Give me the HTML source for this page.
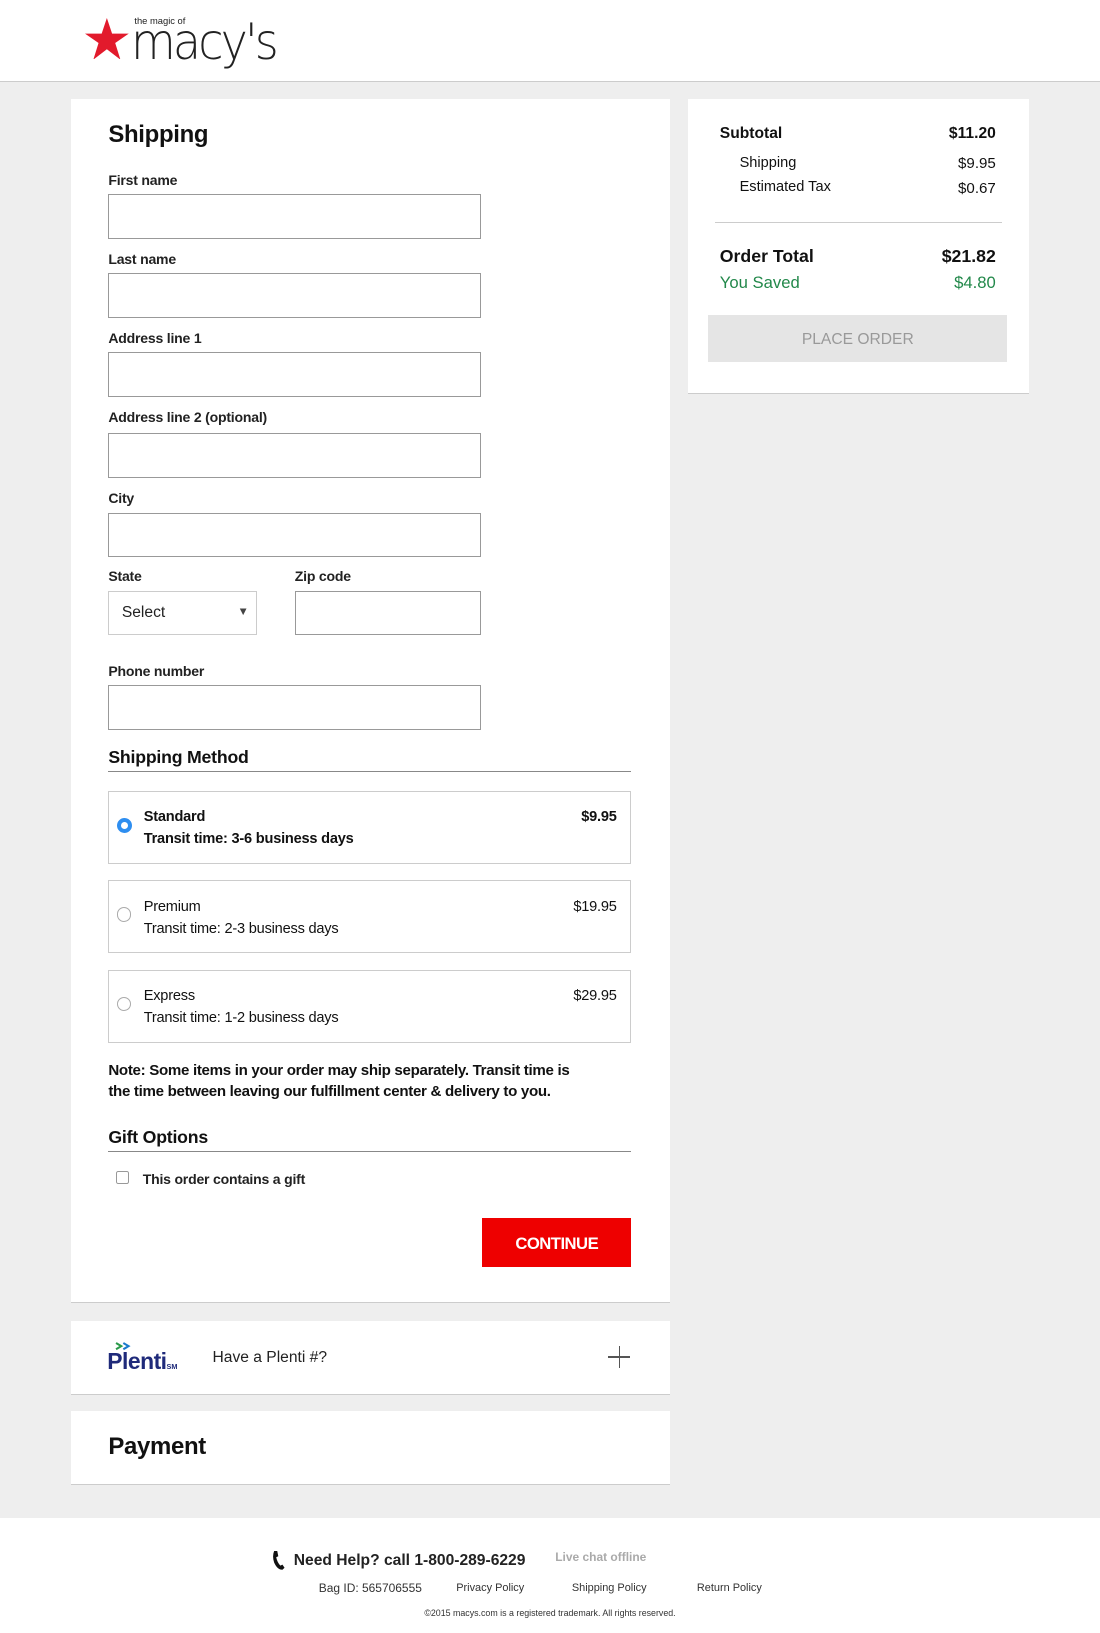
<!DOCTYPE html>
<html><head><meta charset="utf-8"><style>
html{zoom:1.04167}
body{margin:0;width:1056px;height:1568px;background:#eee;font-family:"Liberation Sans",Arial,sans-serif;color:#111;position:relative;overflow:hidden}
.a{position:absolute}
.hdr{left:0;top:0;width:1056px;height:78px;background:#fff;border-bottom:1px solid #ccc}
.card{background:#fff;border-bottom:1px solid #ccc}
.lbl{font-size:13.5px;font-weight:bold;color:#222;letter-spacing:-0.2px}
.inp{border:1px solid #999;background:#fff;box-sizing:border-box;height:43px}
.opt{border:1px solid #ccc;box-sizing:border-box;left:104px;width:502px;height:70px;letter-spacing:-0.2px}
.opt .r{position:absolute;left:7px;top:25px;width:14px;height:14px;border:1px solid #aaa;border-radius:50%;box-sizing:border-box}
.opt .t1{position:absolute;left:33px;top:17px;font-size:14px}
.opt .t2{position:absolute;left:33px;top:38px;font-size:14px}
.opt .p{position:absolute;right:13px;top:17px;font-size:14px}
.foot{left:0;top:1457px;width:1056px;height:111px;background:#fff}
</style></head><body>
<div class="a hdr">
  <svg class="a" style="left:82px;top:17px" width="42" height="40" viewBox="0 0 42 40"><polygon fill="#e21a2c" points="21,0 26,15 42,15 29,24 34,40 21,30 8,40 13,24 0,15 16,15"/></svg>
  <div class="a" style="left:129px;top:15px;font-size:9px;color:#222">the magic of</div>
  <div class="a" style="left:126px;top:12px;font-size:48px;font-weight:100;letter-spacing:-3px;color:#222;font-family:'DejaVu Sans','Liberation Sans',sans-serif;transform:scaleX(0.92);transform-origin:left">macy's</div>
</div>

<div class="a card" style="left:68px;top:95px;width:575px;height:1155px"></div>
<div class="a" style="left:104px;top:116px;font-size:23px;font-weight:bold;letter-spacing:-0.3px">Shipping</div>

<div class="a lbl" style="left:104px;top:165px">First name</div>
<div class="a inp" style="left:104px;top:186px;width:358px"></div>
<div class="a lbl" style="left:104px;top:241px">Last name</div>
<div class="a inp" style="left:104px;top:262px;width:358px"></div>
<div class="a lbl" style="left:104px;top:317px">Address line 1</div>
<div class="a inp" style="left:104px;top:338px;width:358px"></div>
<div class="a lbl" style="left:104px;top:393px">Address line 2 (optional)</div>
<div class="a inp" style="left:104px;top:416px;width:358px"></div>
<div class="a lbl" style="left:104px;top:470px">City</div>
<div class="a inp" style="left:104px;top:492px;width:358px"></div>
<div class="a lbl" style="left:104px;top:545px">State</div>
<div class="a lbl" style="left:283px;top:545px">Zip code</div>
<div class="a inp" style="left:104px;top:567px;width:143px;border-color:#ccc"><span class="a" style="left:12px;top:12px;font-size:15px;color:#222">Select</span><span class="a" style="left:123px;top:14px;font-size:11px;color:#444">▼</span></div>
<div class="a inp" style="left:283px;top:567px;width:179px"></div>
<div class="a lbl" style="left:104px;top:636px">Phone number</div>
<div class="a inp" style="left:104px;top:658px;width:358px"></div>

<div class="a" style="left:104px;top:717px;font-size:17px;font-weight:bold;letter-spacing:-0.2px">Shipping Method</div>
<div class="a" style="left:104px;top:740px;width:502px;height:1px;background:#888"></div>

<div class="a opt" style="top:759px"><div class="r" style="border:4px solid #2e8ef0;background:#fff;width:15px;height:15px"></div><div class="t1" style="font-weight:bold">Standard</div><div class="t2" style="font-weight:bold">Transit time: 3-6 business days</div><div class="p" style="font-weight:bold">$9.95</div></div>
<div class="a opt" style="top:845px"><div class="r"></div><div class="t1">Premium</div><div class="t2">Transit time: 2-3 business days</div><div class="p">$19.95</div></div>
<div class="a opt" style="top:931px"><div class="r"></div><div class="t1">Express</div><div class="t2">Transit time: 1-2 business days</div><div class="p">$29.95</div></div>

<div class="a" style="left:104px;top:1019px;width:500px;font-size:14.5px;font-weight:bold;line-height:20px;letter-spacing:-0.3px">Note: Some items in your order may ship separately. Transit time is<br>the time between leaving our fulfillment center &amp; delivery to you.</div>

<div class="a" style="left:104px;top:1082px;font-size:17px;font-weight:bold;letter-spacing:-0.2px">Gift Options</div>
<div class="a" style="left:104px;top:1105px;width:502px;height:1px;background:#888"></div>
<div class="a" style="left:111px;top:1124px;width:13px;height:13px;border:1px solid #999;border-radius:2px;box-sizing:border-box"></div>
<div class="a lbl" style="left:137px;top:1124px">This order contains a gift</div>

<div class="a" style="left:463px;top:1169px;width:143px;height:47px;background:#e00;color:#fff;font-size:16px;font-weight:bold;text-align:center;line-height:49px;letter-spacing:-0.5px">CONTINUE</div>

<div class="a card" style="left:660px;top:95px;width:328px;height:282px"></div>
<div class="a" style="left:691px;top:120px;font-size:15px;font-weight:bold">Subtotal</div>
<div class="a" style="left:880px;width:76px;text-align:right;top:120px;font-size:15px;font-weight:bold">$11.20</div>
<div class="a" style="left:710px;top:149px;font-size:14px">Shipping</div>
<div class="a" style="left:880px;width:76px;text-align:right;top:149px;font-size:14.5px">$9.95</div>
<div class="a" style="left:710px;top:172px;font-size:14px">Estimated Tax</div>
<div class="a" style="left:880px;width:76px;text-align:right;top:173px;font-size:14.5px">$0.67</div>
<div class="a" style="left:686px;top:213px;width:276px;height:1px;background:#ccc"></div>
<div class="a" style="left:691px;top:236px;font-size:17px;font-weight:bold">Order Total</div>
<div class="a" style="left:860px;width:96px;text-align:right;top:236px;font-size:17px;font-weight:bold">$21.82</div>
<div class="a" style="left:691px;top:262px;font-size:16px;color:#22884a">You Saved</div>
<div class="a" style="left:860px;width:96px;text-align:right;top:262px;font-size:16px;color:#22884a">$4.80</div>
<div class="a" style="left:680px;top:302px;width:287px;height:46px;background:#e5e5e5;color:#999;font-size:15px;text-align:center;line-height:48px">PLACE ORDER</div>

<div class="a card" style="left:68px;top:1268px;width:575px;height:70px"></div>
<svg class="a" style="left:110px;top:1288px" width="20" height="10" viewBox="0 0 20 10"><path d="M1 1 L6 4 L1 7" stroke="#2a9a4a" stroke-width="2" fill="none"/><path d="M8 1 L13 4 L8 7" stroke="#1a7acc" stroke-width="2" fill="none"/></svg>
<div class="a" style="left:103px;top:1294px;font-size:22px;font-weight:bold;color:#1f2a7a;letter-spacing:-0.5px">Plenti<span style="font-size:7px;letter-spacing:0">SM</span></div>
<div class="a" style="left:204px;top:1295px;font-size:15px;color:#222">Have a Plenti #?</div>
<div class="a" style="left:584px;top:1302px;width:21px;height:1.5px;background:#555"></div>
<div class="a" style="left:594px;top:1292px;width:1.5px;height:21px;background:#555"></div>

<div class="a card" style="left:68px;top:1355px;width:575px;height:70px"></div>
<div class="a" style="left:104px;top:1376px;font-size:23px;font-weight:bold;letter-spacing:-0.3px">Payment</div>

<div class="a foot"></div>
<svg class="a" style="left:260px;top:1488px" width="14" height="20" viewBox="0 0 14 20"><path d="M3 1 L6 1 L7 6 L5 7 Q6 12 9 15 L11 14 L13 17 L11 19 Q6 19 3 12 Q1 6 3 1Z" fill="#111"/></svg>
<div class="a" style="left:282px;top:1490px;font-size:15px;font-weight:bold;color:#222">Need Help? call 1-800-289-6229</div>
<div class="a" style="left:533px;top:1488px;font-size:11.5px;font-weight:bold;color:#aaa">Live chat offline</div>
<div class="a" style="left:306px;top:1518px;font-size:11.5px;color:#333">Bag ID: 565706555</div>
<div class="a" style="left:438px;top:1519px;font-size:10.5px;color:#333">Privacy Policy</div>
<div class="a" style="left:549px;top:1519px;font-size:10.5px;color:#333">Shipping Policy</div>
<div class="a" style="left:669px;top:1519px;font-size:10.5px;color:#333">Return Policy</div>
<div class="a" style="left:0;width:1056px;text-align:center;top:1544px;font-size:8.5px;color:#333">©2015 macys.com is a registered trademark. All rights reserved.</div>
</body></html>
